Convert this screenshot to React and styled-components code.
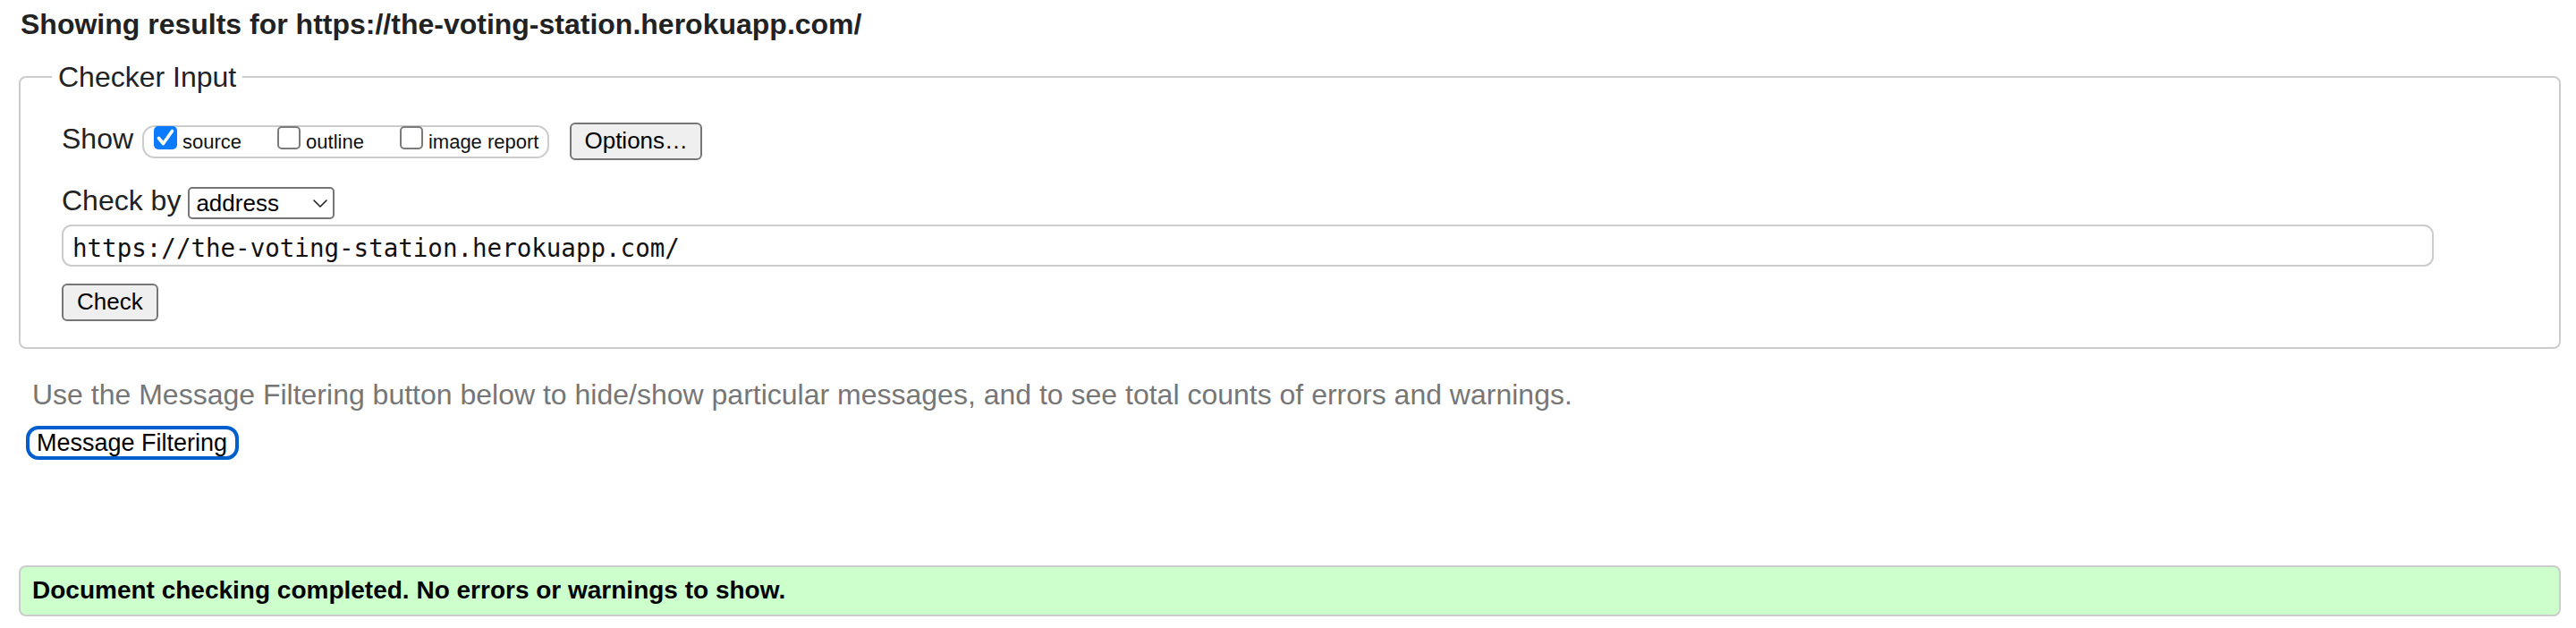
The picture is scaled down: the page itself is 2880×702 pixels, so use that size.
import React from "react";
import styled, { createGlobalStyle } from "styled-components";

const GlobalStyle = createGlobalStyle`
  html, body { margin: 0; padding: 0; background: #ffffff; }
  body {
    font-family: "Liberation Sans", Arial, sans-serif;
    color: #222222;
  }
  * { box-sizing: border-box; }
`;

const Page = styled.main`
  width: 2880px;
  padding: 9px 17px 13px 21px;
`;

const Title = styled.h2`
  margin: 0 0 0 2px;
  font-size: 32px;
  line-height: 36px;
  font-weight: 700;
  color: #222222;
`;

const Fieldset = styled.fieldset`
  margin: 23px 0 0 0;
  padding: 33px 0 29px 46px;
  border: 2px solid #cccccc;
  border-radius: 8px;
  min-inline-size: 0;
`;

const Legend = styled.legend`
  margin-left: -11px;
  padding: 0 7px;
  font-size: 32px;
  line-height: 36px;
  color: #222222;
`;

const Row = styled.div`
  display: flex;
  align-items: flex-start;
  margin-top: ${(p) => p.$gap || 0}px;
`;

const Label = styled.span`
  font-size: 32px;
  line-height: 36px;
  color: #222222;
  margin-right: ${(p) => p.$space || 0}px;
`;

const Group = styled.div`
  display: flex;
  align-items: flex-start;
  height: 37px;
  margin-top: 3px;
  padding: 0 10px 0 11px;
  border: 2px solid #cccccc;
  border-radius: 14px;
  gap: 40px;
`;

const Option = styled.label`
  display: flex;
  align-items: flex-start;
  gap: 6px;
`;

const Box = styled.span`
  display: flex;
  align-items: center;
  justify-content: center;
  width: 26px;
  height: 26px;
  margin-top: -1px;
  border-radius: 5px;
  border: ${(p) => (p.$checked ? "none" : "2px solid #7a7a7a")};
  background: ${(p) => (p.$checked ? "#0a7aff" : "#ffffff")};
`;

const OptionText = styled.span`
  margin-top: 4px;
  font-size: 22px;
  line-height: 25px;
  color: #111111;
`;

const Button = styled.button`
  height: 42px;
  margin-left: ${(p) => p.$left || 0}px;
  padding: 3px ${(p) => p.$pad || 14}px 5px;
  font-family: "Liberation Sans", Arial, sans-serif;
  font-size: 26px;
  line-height: 30px;
  color: #000000;
  background: #efefef;
  border: 2px solid #767676;
  border-radius: 6px;
`;

const SelectWrap = styled.div`
  position: relative;
  margin-top: 3px;
  width: 164px;
  height: 36px;
`;

const Select = styled.select`
  appearance: none;
  -webkit-appearance: none;
  width: 100%;
  height: 100%;
  padding: 0 0 0 7px;
  font-family: "Liberation Sans", Arial, sans-serif;
  font-size: 26px;
  color: #000000;
  background: #ffffff;
  border: 2px solid #767676;
  border-radius: 5px;
`;

const Chevron = styled.svg`
  position: absolute;
  right: 8px;
  top: 14px;
  pointer-events: none;
`;

const UrlInput = styled.input`
  display: block;
  width: 2652px;
  height: 47px;
  padding: 8px 8px 3px 10px;
  font-family: "DejaVu Sans Mono", "Liberation Mono", monospace;
  font-size: 27.5px;
  line-height: 32px;
  color: #111111;
  background: #ffffff;
  border: 2px solid #cccccc;
  border-radius: 11px;
  outline: none;
`;

const Hint = styled.p`
  margin: 33px 0 0 15px;
  font-size: 32px;
  line-height: 36px;
  color: #767676;
`;

const FilterButton = styled.button`
  display: block;
  height: 38px;
  margin: 17px 0 0 8px;
  padding: 0 9px 0 8px;
  font-family: "Liberation Sans", Arial, sans-serif;
  font-size: 27px;
  line-height: 30px;
  color: #000000;
  background: #ffffff;
  border: 4px solid #005fcc;
  border-radius: 14px;
`;

const Success = styled.div`
  margin-top: 118px;
  padding: 10px 13px 11px;
  font-size: 28px;
  line-height: 32px;
  font-weight: 700;
  color: #000000;
  background: #ccffcc;
  border: 2px solid #cccccc;
  border-radius: 8px;
`;

function CheckBox({ checked }) {
  return (
    <Box $checked={checked}>
      {checked && (
        <svg width="26" height="26" viewBox="0 0 26 26">
          <path
            d="M5.5 13.5 L10.5 19.5 L20.5 5.5"
            fill="none"
            stroke="#ffffff"
            strokeWidth="3.6"
            strokeLinecap="round"
            strokeLinejoin="round"
          />
        </svg>
      )}
    </Box>
  );
}

export default function App() {
  return (
    <>
      <GlobalStyle />
      <Page>
        <Title>Showing results for https://the-voting-station.herokuapp.com/</Title>
        <Fieldset>
          <Legend>Checker Input</Legend>
          <Row>
            <Label $space={10}>Show</Label>
            <Group>
              <Option>
                <CheckBox checked />
                <OptionText>source</OptionText>
              </Option>
              <Option>
                <CheckBox />
                <OptionText>outline</OptionText>
              </Option>
              <Option>
                <CheckBox />
                <OptionText>image report</OptionText>
              </Option>
            </Group>
            <Button type="button" $left={23} $pad={14}>
              Options…
            </Button>
          </Row>
          <Row $gap={27}>
            <Label $space={8}>Check by</Label>
            <SelectWrap>
              <Select defaultValue="address">
                <option value="address">address</option>
                <option value="upload">file upload</option>
                <option value="text">text input</option>
              </Select>
              <Chevron width="16" height="9" viewBox="0 0 16 9">
                <path
                  d="M1 1 L8 8 L15 1"
                  fill="none"
                  stroke="#222222"
                  strokeWidth="1.6"
                  strokeLinecap="round"
                  strokeLinejoin="round"
                />
              </Chevron>
            </SelectWrap>
          </Row>
          <Row $gap={6}>
            <UrlInput
              type="url"
              readOnly
              defaultValue="https://the-voting-station.herokuapp.com/"
            />
          </Row>
          <Row $gap={19}>
            <Button type="button" $pad={15}>
              Check
            </Button>
          </Row>
        </Fieldset>
        <Hint>
          Use the Message Filtering button below to hide/show particular messages, and to see total
          counts of errors and warnings.
        </Hint>
        <FilterButton type="button">Message Filtering</FilterButton>
        <Success>Document checking completed. No errors or warnings to show.</Success>
      </Page>
    </>
  );
}
